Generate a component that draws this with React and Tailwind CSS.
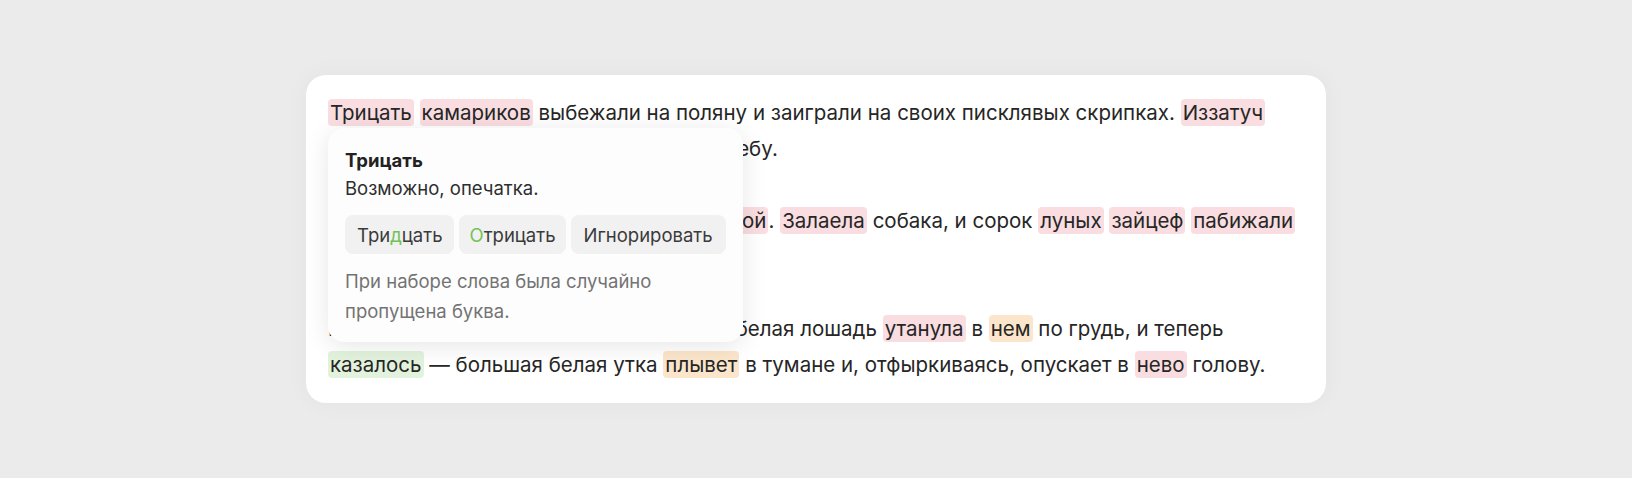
const Mark = ({ tone = 'red', children }) => {
  const tones = {
    red: 'bg-[#f9dde0]',
    orange: 'bg-[#fbe6cb]',
    green: 'bg-[#e3f2dc]',
  };
  return <span className={`${tones[tone]} rounded-[4px] px-[2px] py-[1px]`}>{children}</span>;
};

export default function App() {
  return (
    <div
      className="flex h-[478px] w-full items-center justify-center bg-[#ebebeb]"
      style={{ fontFamily: 'Inter, "Noto Sans", sans-serif' }}
    >
      <div className="relative h-[328px] w-[1020px] rounded-[20px] bg-white px-[22px] py-[20px] text-[20.5px] leading-[36px] text-[#262626] shadow-[0_0_24px_rgba(0,0,0,0.04)]">
        <p className="whitespace-nowrap">
          <Mark>Трицать</Mark> <Mark>камариков</Mark> выбежали на поляну и заиграли на своих писклявых скрипках. <Mark>Иззатуч</Mark>
          <br />
          вышла луна, и, улыбаясь, проплыла по небу.
        </p>
        <p className="mt-[36px] whitespace-nowrap">
          «Ммм-у...» — грустно вздохнула за <Mark>ричкой</Mark>. <Mark>Залаела</Mark> собака, и сорок <Mark>луных</Mark> <Mark>зайцеф</Mark> <Mark>пабижали</Mark>
          <br />
          по дорожке.
        </p>
        <p className="mt-[36px] whitespace-nowrap">
          Над речкой поднялся туман, и большая белая лошадь <Mark>утанула</Mark> в <Mark tone="orange">нем</Mark> по грудь, и теперь
          <br />
          <Mark tone="green">казалось</Mark> — большая белая утка <Mark tone="orange">плывет</Mark> в тумане и, отфыркиваясь, опускает в <Mark>нево</Mark> голову.
        </p>

        <div className="absolute left-[22px] top-[53px] w-[415px] rounded-[16px] bg-[#fdfdfd] px-[17px] pt-[18px] pb-[16px] text-[18.5px] leading-[28px] shadow-[0_4px_24px_rgba(0,0,0,0.10)]">
          <div className="font-bold text-[#222]">Трицать</div>
          <div className="text-[#2e2e2e]">Возможно, опечатка.</div>
          <div className="mt-[13px] flex gap-[5px]">
            <button className="h-[39px] rounded-[8px] bg-[#f1f1f1] px-[12px] text-[#3a3a3a]">
              Три<span className="text-[#74c257]">д</span>цать
            </button>
            <button className="h-[39px] rounded-[8px] bg-[#f1f1f1] px-[10px] text-[#3a3a3a]">
              <span className="text-[#74c257]">О</span>трицать
            </button>
            <button className="h-[39px] rounded-[8px] bg-[#f1f1f1] px-[13px] text-[#3a3a3a]">
              Игнорировать
            </button>
          </div>
          <p className="mt-[12px] leading-[30px] text-[#737373]">
            При наборе слова была случайно
            <br />
            пропущена буква.
          </p>
        </div>
      </div>
    </div>
  );
}
